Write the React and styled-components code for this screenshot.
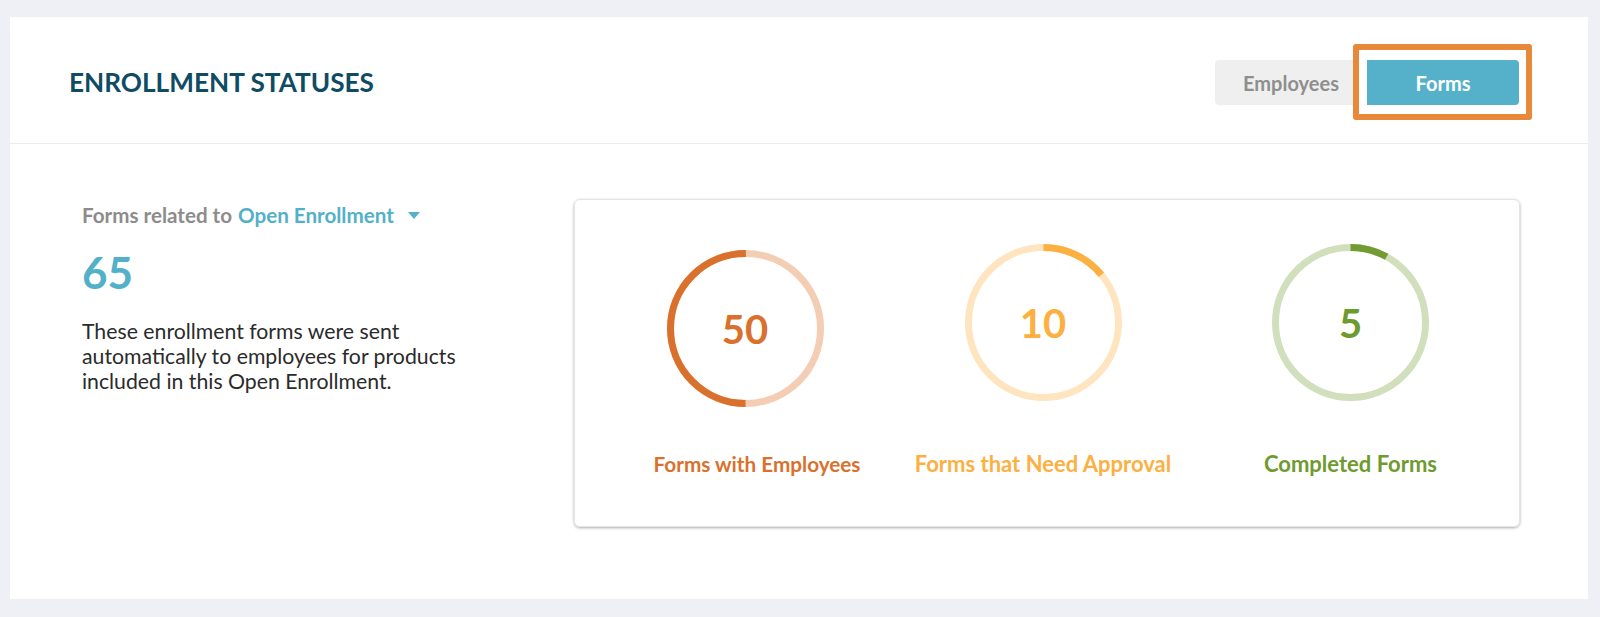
import React from 'react'
import styled, { createGlobalStyle } from 'styled-components'

const GlobalStyle = createGlobalStyle`
  html, body {
    margin: 0;
    padding: 0;
    background: #eef0f5;
  }
  body {
    font-family: Lato, 'Open Sans', sans-serif;
    -webkit-font-smoothing: antialiased;
  }
`

const stats = [
  { value: 50, label: 'Forms with Employees', color: '#d9712d', track: '#f3cdb4', text: '#d9712d', part: 0.5, start: 90, drop: 6, dx: -6, labelDx: 6, size: 20.7 },
  { value: 10, label: 'Forms that Need Approval', color: '#fdb042', track: '#ffe5bf', text: '#fdb042', part: 0.14, start: -90, drop: 0, dx: 0, labelDx: 0, size: 22 },
  { value: 5, label: 'Completed Forms', color: '#729b34', track: '#d1dfbd', text: '#6e9a2f', part: 0.08, start: -90, drop: 0, dx: 0, labelDx: 0, size: 22 },
]

const SIZE = 157
const STROKE = 7
const R = (SIZE - STROKE) / 2
const CIRC = 2 * Math.PI * R

const Page = styled.div`
  padding: 17px 12px 17px 10px;
`

const Panel = styled.section`
  background: #fff;
`

const Header = styled.header`
  display: flex;
  align-items: center;
  justify-content: space-between;
  height: 127px;
  box-sizing: border-box;
  padding: 5px 69px 0 59px;
  border-bottom: 1px solid #ececec;
`

const Title = styled.h2`
  margin: 0;
  font-size: 26.2px;
  font-weight: 700;
  line-height: 1.2;
  color: #0f4c64;
`

const Toggle = styled.div`
  display: flex;
`

const Marked = styled.div`
  position: relative;
  display: flex;
`

// orange call-out drawn around the active tab
const Highlight = styled.span`
  position: absolute;
  top: -16px;
  bottom: -15px;
  left: -14px;
  right: -13px;
  background: #fff;
  border: 6px solid #e8883a;
  border-radius: 3px;
  pointer-events: none;
`

const ToggleButton = styled.button`
  position: relative;
  width: 152px;
  height: 45px;
  border: 0;
  padding: 0;
  font-family: Lato, sans-serif;
  font-size: 20px;
  font-weight: 700;
  cursor: pointer;
  background: ${(p) => (p.$active ? '#55b1ca' : '#efefef')};
  color: ${(p) => (p.$active ? '#fff' : '#8e8e8e')};
  border-radius: ${(p) => (p.$active ? '0 4px 4px 0' : '4px 0 0 4px')};
`

const Body = styled.div`
  display: grid;
  grid-template-columns: 500px 1fr;
`

const Summary = styled.div`
  padding: 59px 0 0 72px;
`

const Related = styled.div`
  display: flex;
  align-items: center;
  gap: 6px;
  font-size: 20.6px;
  line-height: 24px;
  font-weight: 700;
  color: #8c8c8c;
`

const Picker = styled.span`
  display: inline-flex;
  align-items: center;
  gap: 14px;
  color: #52b1c9;
  cursor: pointer;
`

const Count = styled.div`
  margin-top: 19px;
  font-size: 44px;
  font-weight: 700;
  line-height: 1.2;
  color: #52b1c9;
`

const Note = styled.p`
  margin: 20px 0 0;
  font-size: 21.25px;
  line-height: 25px;
  color: #2b2b2b;
`

const ChartArea = styled.div`
  padding: 55px 68px 72px 64px;
`

const Card = styled.div`
  display: grid;
  grid-template-columns: 306px 278px 1fr;
  padding: 44px 0 50px 23px;
  border: 1px solid #e4e4e4;
  border-radius: 6px;
  box-shadow: 0 1px 3px rgba(0, 0, 0, 0.32);
`

const Stat = styled.div`
  display: flex;
  flex-direction: column;
  align-items: center;
`

const Ring = styled.div`
  display: grid;
  place-items: center;
  width: ${SIZE}px;
  height: ${SIZE}px;
  margin-top: ${(p) => p.$drop}px;
  margin-left: ${(p) => Math.max(p.$dx * 2, 0)}px;
  margin-right: ${(p) => Math.max(-p.$dx * 2, 0)}px;

  & > * {
    grid-area: 1 / 1;
  }
`

const Value = styled.span`
  font-size: 40px;
  font-weight: 700;
  line-height: 1.2;
  color: ${(p) => p.$color};
`

const Label = styled.div`
  margin-top: ${(p) => 51 - p.$drop}px;
  margin-left: ${(p) => Math.max(p.$dx * 2, 0)}px;
  font-size: ${(p) => p.$size}px;
  line-height: 24px;
  font-weight: 700;
  white-space: nowrap;
  color: ${(p) => p.$color};
`

const Donut = ({ part, color, track, start }) => {
  const c = SIZE / 2
  return (
    <svg width={SIZE} height={SIZE} viewBox={`0 0 ${SIZE} ${SIZE}`}>
      <circle cx={c} cy={c} r={R} fill='none' stroke={track} strokeWidth={STROKE} />
      <circle
        cx={c}
        cy={c}
        r={R}
        fill='none'
        stroke={color}
        strokeWidth={STROKE}
        strokeDasharray={`${CIRC * part} ${CIRC}`}
        transform={`rotate(${start} ${c} ${c})`}
      />
    </svg>
  )
}

const Caret = () => (
  <svg width='12' height='7' viewBox='0 0 12 7'>
    <polygon points='0,0 12,0 6,7' fill='#52b1c9' />
  </svg>
)

const App = () => {
  return (
    <>
      <GlobalStyle />
      <Page>
        <Panel>
          <Header>
            <Title>ENROLLMENT STATUSES</Title>
            <Toggle>
              <ToggleButton>Employees</ToggleButton>
              <Marked>
                <Highlight />
                <ToggleButton $active>Forms</ToggleButton>
              </Marked>
            </Toggle>
          </Header>

          <Body>
            <Summary>
              <Related>
                Forms related to
                <Picker>
                  Open Enrollment
                  <Caret />
                </Picker>
              </Related>
              <Count>65</Count>
              <Note>
                These enrollment forms were sent automatically to employees for
                products included in this Open Enrollment.
              </Note>
            </Summary>

            <ChartArea>
              <Card>
                {stats.map((s) => (
                  <Stat key={s.label}>
                    <Ring $drop={s.drop} $dx={s.dx}>
                      <Donut part={s.part} color={s.color} track={s.track} start={s.start} />
                      <Value $color={s.text}>{s.value}</Value>
                    </Ring>
                    <Label $color={s.text} $drop={s.drop} $dx={s.labelDx} $size={s.size}>
                      {s.label}
                    </Label>
                  </Stat>
                ))}
              </Card>
            </ChartArea>
          </Body>
        </Panel>
      </Page>
    </>
  )
}

export default App
